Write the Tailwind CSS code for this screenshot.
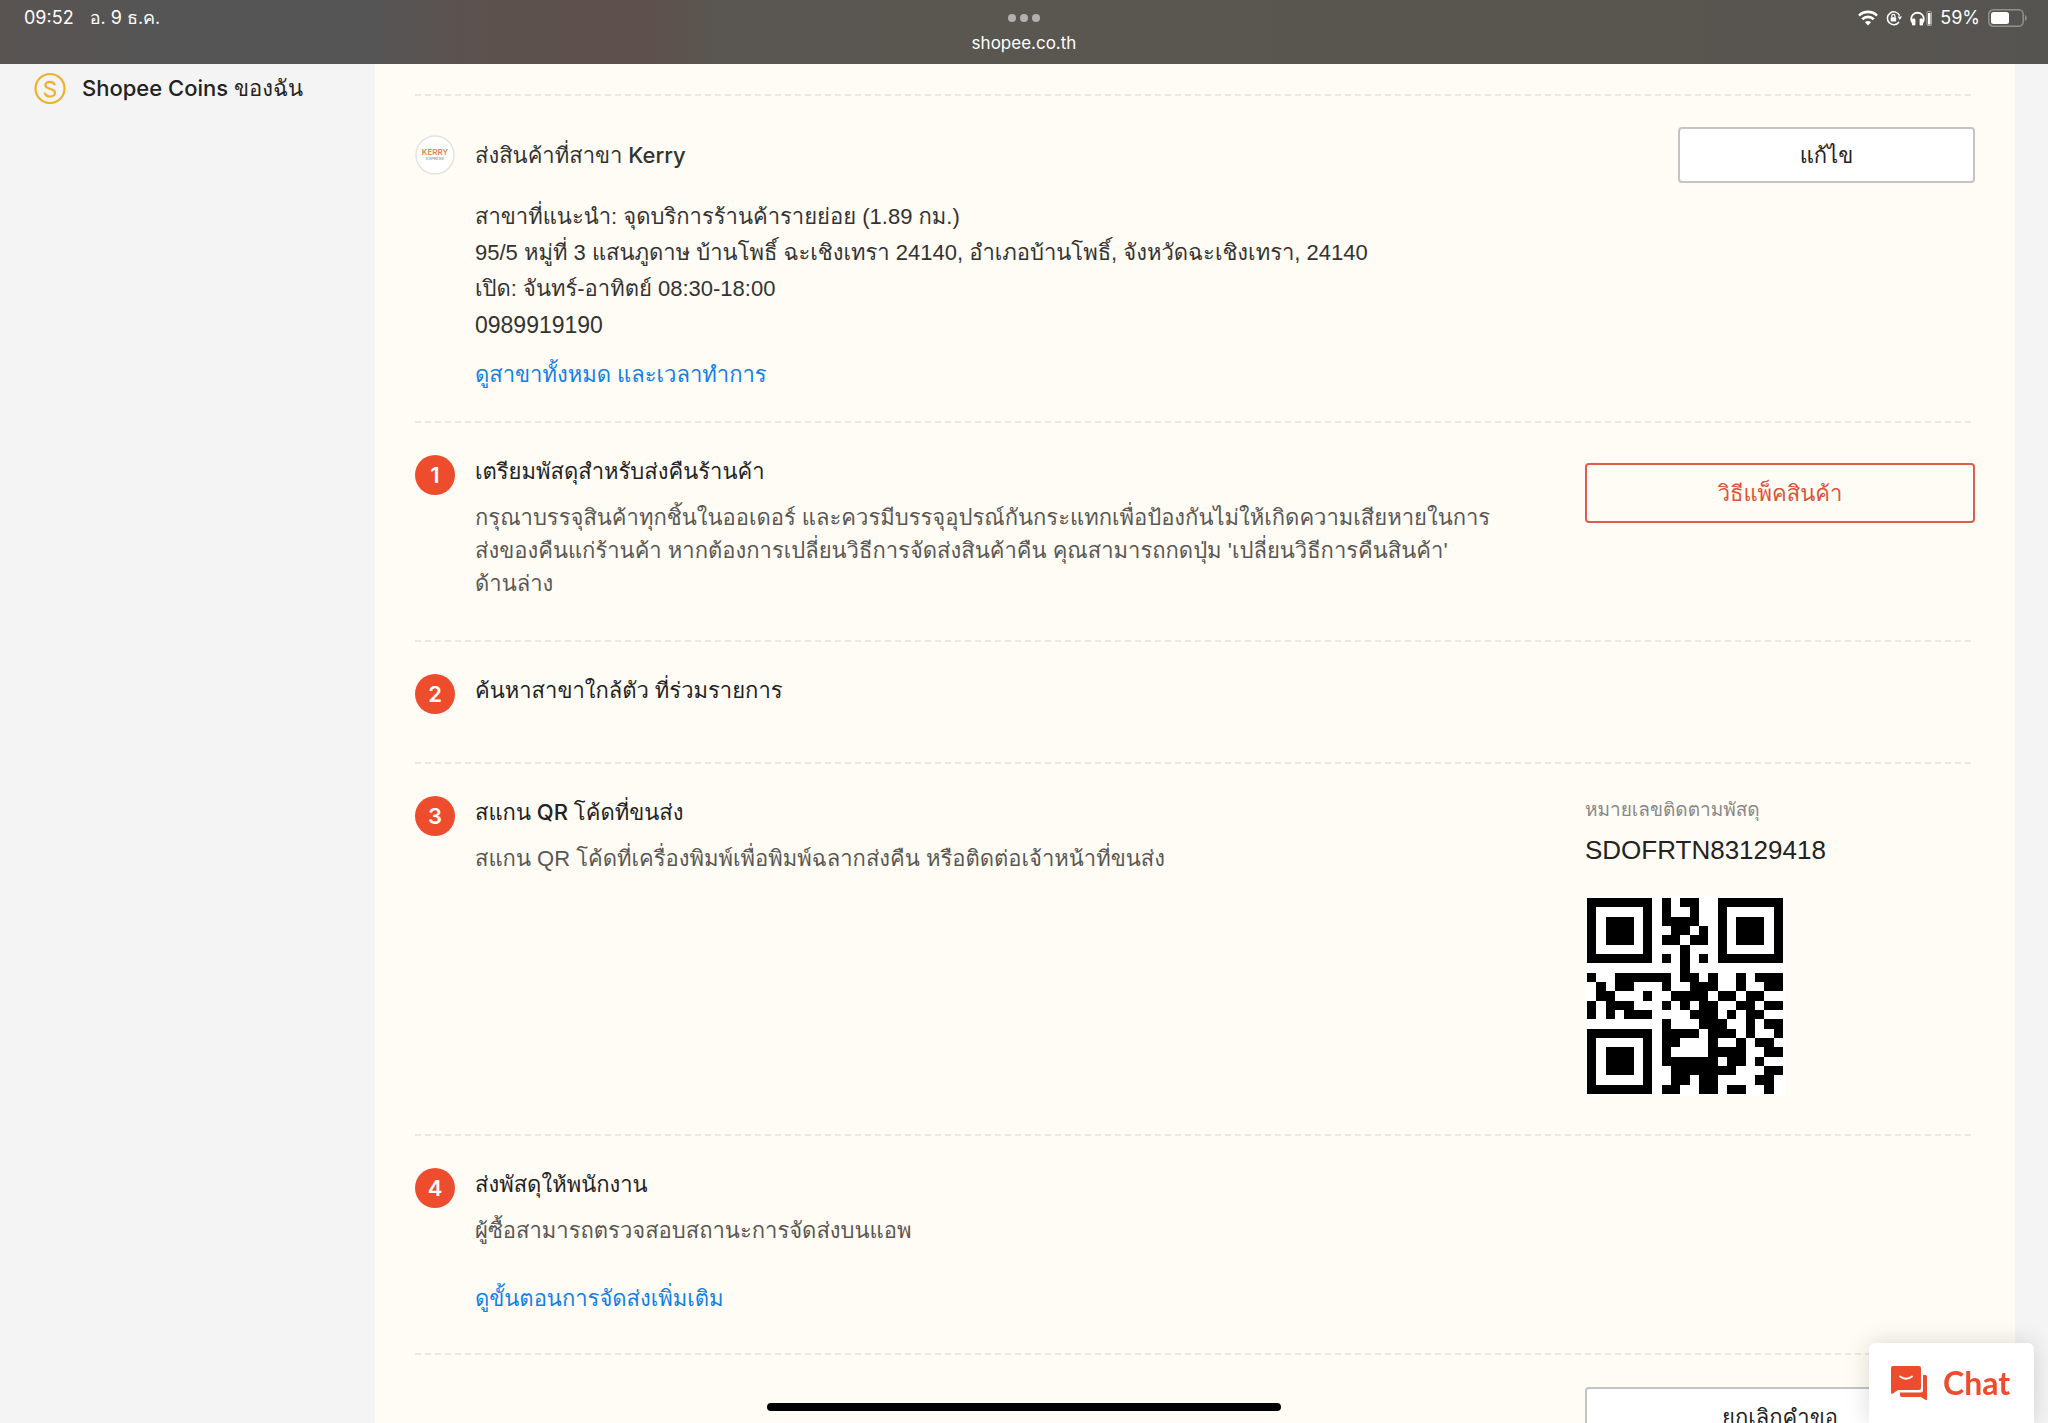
<!DOCTYPE html>
<html lang="th">
<head>
  <meta charset="UTF-8">
  <meta name="viewport" content="width=device-width, initial-scale=1.0">
  <title>Shopee</title>
  <script src="https://cdn.jsdelivr.net/npm/@tailwindcss/browser@4"></script>
</head>
<body class="h-screen overflow-hidden flex flex-col bg-[#f4f4f4] text-[#222] text-[22px] font-['Liberation_Sans','Loma',sans-serif]">
  <!-- Status bar -->
  <header class="relative h-16 shrink-0 flex justify-between items-start pl-6 pr-5 pt-1 text-white bg-[linear-gradient(90deg,#595452_0%,#555_8%,#555_18%,#5d514d_24%,#5e514d_32%,#5a5651_35%,#595650_80%,#565450_100%)]">
    <div class="flex gap-4 text-lg leading-7 font-['Inter','Loma',sans-serif]">
      <span>09:52</span>
      <span>อ. 9 ธ.ค.</span>
    </div>
    <div class="absolute inset-x-0 top-0 flex flex-col items-center pt-[14px] gap-[9px]">
      <div class="flex gap-1">
        <span class="size-2 rounded-full bg-[#b3b1af]"></span>
        <span class="size-2 rounded-full bg-[#b3b1af]"></span>
        <span class="size-2 rounded-full bg-[#b3b1af]"></span>
      </div>
      <span class="text-[17px] leading-6 font-['Inter',sans-serif]">shopee.co.th</span>
    </div>
    <div class="flex items-center gap-2 text-lg leading-7 font-['Inter',sans-serif]">
      <svg class="w-5 h-4" viewBox="0 0 20 16" fill="none" stroke="#fff" stroke-width="2.6">
        <path d="M1 5.6a12.8 12.8 0 0 1 18 0M4.3 9.2a8.2 8.2 0 0 1 11.4 0"/>
        <path d="M10 15.5 7 12.3a4.2 4.2 0 0 1 6 0z" fill="#fff" stroke="none"/>
      </svg>
      <svg class="size-4" viewBox="0 0 16 16" fill="none" stroke="#fff" stroke-width="1.5">
        <path d="M13.6 5.6A6.4 6.4 0 1 0 13 12"/>
        <path d="M11.6 6.6h4.4L13.8 10z" fill="#fff" stroke="none"/>
        <rect x="4.6" y="7.2" width="5.6" height="4.4" rx=".8" fill="#fff" stroke="none"/>
        <path d="M5.8 7.5V6a1.6 1.6 0 0 1 3.2 0v1.5" stroke-width="1.2"/>
      </svg>
      <svg class="w-[22px] h-[18px]" viewBox="0 0 22 16" fill="none" stroke="#fff">
        <path d="M2.6 13A6.3 6.3 0 1 1 12.4 13" stroke-width="1.8"/>
        <rect x="2" y="8.5" width="3.4" height="7" rx="1.3" fill="#fff" stroke="none"/>
        <rect x="9.6" y="8.5" width="3.4" height="7" rx="1.3" fill="#fff" stroke="none"/>
        <rect x="17" y="1.5" width="4.5" height="14" rx="1" stroke="#aaa8a5"/>
        <rect x="18" y="3" width="2.5" height="11.5" fill="#fff" stroke="none"/>
      </svg>
      <span>59%</span>
      <svg class="w-10 h-[18px]" viewBox="0 0 40 18" fill="none">
        <rect x=".8" y=".8" width="34.4" height="16.4" rx="4.5" stroke="#93918e" stroke-width="1.5"/>
        <rect x="3" y="3" width="18" height="12" rx="2.5" fill="#fff"/>
        <path d="M37 6c2.4.8 2.4 5.2 0 6z" fill="#93918e"/>
      </svg>
    </div>
  </header>

  <div class="flex flex-1 min-h-0">
    <aside class="w-[375px] shrink-0 pl-[34px] pt-2">
      <a href="#" class="flex items-center gap-4 leading-8 font-medium font-['Inter','Loma',sans-serif]">
        <svg class="size-8" viewBox="0 0 32 32" fill="none" stroke="#f0b02a" stroke-width="2.2">
          <circle cx="16" cy="16.5" r="14.5"/>
          <path d="M20.6 12.4C19.6 10.6 17.9 9.8 16 9.8c-2.6 0-4.6 1.4-4.6 3.5 0 4.7 9.6 2.5 9.6 7.4 0 2.3-2.2 3.8-5 3.8-2.3 0-4.3-1-5.2-3" stroke-linecap="round"/>
        </svg>
        Shopee Coins ของฉัน
      </a>
    </aside>

    <main class="flex-1 min-w-0 overflow-hidden bg-[#fffcf5] px-10 mr-[33px] pt-[30px]">
      <hr class="border-0 h-[2px] bg-[repeating-linear-gradient(90deg,#ebe8e2_0px_6px,transparent_6px_10px)]">

      <!-- Kerry branch -->
      <section class="pt-[31px] pb-[30px]">
        <div class="flex items-center">
          <svg class="size-10 mr-5" viewBox="0 0 40 40">
            <circle cx="20" cy="20" r="19" fill="#fff" stroke="#e3e3e0" stroke-width="1.5"/>
            <text x="20" y="20" text-anchor="middle" font-family="Inter" font-size="8" font-weight="600" fill="#f08048">KERRY</text>
            <text x="20" y="25" text-anchor="middle" font-family="Inter" font-size="4" fill="#777">EXPRESS</text>
          </svg>
          <h2 class="flex-1 leading-8 font-medium text-[#333] font-['Inter','Loma',sans-serif]">ส่งสินค้าที่สาขา Kerry</h2>
          <button class="w-[297px] h-14 bg-white border-2 border-[#c4c4c2] rounded">แก้ไข</button>
        </div>
        <div class="pl-[60px] pt-4 leading-9 text-[#333]">
          <p>สาขาที่แนะนำ: จุดบริการร้านค้ารายย่อย (1.89 กม.)</p>
          <p>95/5 หมู่ที่ 3 แสนภูดาษ บ้านโพธิ์ ฉะเชิงเทรา 24140, อำเภอบ้านโพธิ์, จังหวัดฉะเชิงเทรา, 24140</p>
          <p>เปิด: จันทร์-อาทิตย์ 08:30-18:00</p>
          <p class="text-[23px]">0989919190</p>
          <a href="#" class="block w-fit mt-4 leading-8 text-[#1080e8]">ดูสาขาทั้งหมด และเวลาทำการ</a>
        </div>
      </section>
      <hr class="border-0 h-[2px] bg-[repeating-linear-gradient(90deg,#ebe8e2_0px_6px,transparent_6px_10px)]">

      <!-- Step 1 -->
      <section class="flex items-start pt-8 pb-10">
        <span class="size-10 mr-5 shrink-0 rounded-full bg-[#ee4d2d] text-white text-center leading-10 font-semibold font-['Inter',sans-serif]">1</span>
        <div class="flex-1">
          <h2 class="leading-8 font-medium font-['Inter','Loma',sans-serif]">เตรียมพัสดุสำหรับส่งคืนร้านค้า</h2>
          <p class="mt-[14px] leading-[33px] text-[#595754]">กรุณาบรรจุสินค้าทุกชิ้นในออเดอร์ และควรมีบรรจุอุปรณ์กันกระแทกเพื่อป้องกันไม่ให้เกิดความเสียหายในการ<br>ส่งของคืนแก่ร้านค้า หากต้องการเปลี่ยนวิธีการจัดส่งสินค้าคืน คุณสามารถกดปุ่ม 'เปลี่ยนวิธีการคืนสินค้า'<br>ด้านล่าง</p>
        </div>
        <button class="w-[390px] h-[60px] mt-2 border-2 border-[#dd5f48] rounded text-[#dd5238]">วิธีแพ็คสินค้า</button>
      </section>
      <hr class="border-0 h-[2px] bg-[repeating-linear-gradient(90deg,#ebe8e2_0px_6px,transparent_6px_10px)]">

      <!-- Step 2 -->
      <section class="flex items-start pt-8 pb-12">
        <span class="size-10 mr-5 shrink-0 rounded-full bg-[#ee4d2d] text-white text-center leading-10 font-semibold font-['Inter',sans-serif]">2</span>
        <h2 class="leading-8 font-medium font-['Inter','Loma',sans-serif]">ค้นหาสาขาใกล้ตัว ที่ร่วมรายการ</h2>
      </section>
      <hr class="border-0 h-[2px] bg-[repeating-linear-gradient(90deg,#ebe8e2_0px_6px,transparent_6px_10px)]">

      <!-- Step 3 -->
      <section class="flex items-start pt-8 pb-[38px]">
        <span class="size-10 mr-5 shrink-0 rounded-full bg-[#ee4d2d] text-white text-center leading-10 font-semibold font-['Inter',sans-serif]">3</span>
        <div class="flex-1">
          <h2 class="leading-8 font-medium font-['Inter','Loma',sans-serif]">สแกน QR โค้ดที่ขนส่ง</h2>
          <p class="mt-[14px] leading-[33px] text-[#595754]">สแกน QR โค้ดที่เครื่องพิมพ์เพื่อพิมพ์ฉลากส่งคืน หรือติดต่อเจ้าหน้าที่ขนส่ง</p>
        </div>
        <div class="w-[390px]">
          <p class="text-[19px] leading-7 text-[#888]">หมายเลขติดตามพัสดุ</p>
          <p class="mt-[10px] text-[26px] leading-8">SDOFRTN83129418</p>
          <svg id="qr" class="size-[200px] mt-[30px] bg-white" viewBox="-0.2 -0.2 21.4 21.4" shape-rendering="crispEdges"></svg>
        </div>
      </section>
      <hr class="border-0 h-[2px] bg-[repeating-linear-gradient(90deg,#ebe8e2_0px_6px,transparent_6px_10px)]">

      <!-- Step 4 -->
      <section class="flex items-start pt-8 pb-[38px]">
        <span class="size-10 mr-5 shrink-0 rounded-full bg-[#ee4d2d] text-white text-center leading-10 font-semibold font-['Inter',sans-serif]">4</span>
        <div class="flex-1">
          <h2 class="leading-8 font-medium font-['Inter','Loma',sans-serif]">ส่งพัสดุให้พนักงาน</h2>
          <p class="mt-[14px] leading-[33px] text-[#595754]">ผู้ซื้อสามารถตรวจสอบสถานะการจัดส่งบนแอพ</p>
          <a href="#" class="block w-fit mt-9 leading-8 text-[#1080e8]">ดูขั้นตอนการจัดส่งเพิ่มเติม</a>
        </div>
      </section>
      <hr class="border-0 h-[2px] bg-[repeating-linear-gradient(90deg,#ebe8e2_0px_6px,transparent_6px_10px)]">

      <div class="flex justify-end pt-8">
        <button class="w-[390px] h-[60px] bg-white border-2 border-[#c4c4c2] rounded">ยกเลิกคำขอ</button>
      </div>
    </main>
  </div>

  <!-- Chat launcher -->
  <button class="fixed bottom-0 right-[14px] w-[165px] h-20 flex items-center gap-4 pl-[22px] rounded-t-md bg-white text-[#ee4d2d] text-[32px] leading-10 font-bold font-['Lato',sans-serif] shadow-[0_0_24px_rgba(0,0,0,0.15)]">
    <svg class="w-9 h-[34px]" viewBox="0 0 36 34" fill="#ee4d2d">
      <path d="M2 0h26a2 2 0 0 1 2 2v20a2 2 0 0 1-2 2H7l-5 3.5c-1 .6-2 0-2-1V2a2 2 0 0 1 2-2z"/>
      <path d="M32 9h2.5A1.5 1.5 0 0 1 36 10.5V33c0 1-1 1.3-1.8.7L30 31H11a2 2 0 0 1-2-2v-2.5h20.5A2.5 2.5 0 0 0 32 24z"/>
      <path d="M9 10.5q6 4.5 12 0" fill="none" stroke="#fff" stroke-width="1.8" stroke-linecap="round"/>
    </svg>
    Chat
  </button>

  <!-- Home indicator -->
  <div class="fixed bottom-3 left-1/2 -translate-x-1/2 w-[514px] h-2 rounded-full bg-black"></div>

  <script>
    const rows = [
      '111111101011001111111',
      '100000101001001000001',
      '101110101111001011101',
      '101110100110101011101',
      '101110101101101011101',
      '100000100010001000001',
      '111111101010101111111',
      '000000000010000000000',
      '100111111011010010111',
      '010110001001110010011',
      '011000100111101101100',
      '101110001010110011011',
      '101011100001110101100',
      '000000001000111001011',
      '111111101111011101001',
      '100000101100010010110',
      '101110101000011110011',
      '101110101111110110100',
      '101110100111111100011',
      '100000100110110000110',
      '111111101100110110010',
    ];
    let d = '';
    rows.forEach((row, y) => {
      [...row].forEach((cell, x) => {
        if (cell === '1') d += `M${x} ${y}h1v1h-1z`;
      });
    });
    document.getElementById('qr').innerHTML = `<path d="${d}"/>`;
  </script>
</body>
</html>
